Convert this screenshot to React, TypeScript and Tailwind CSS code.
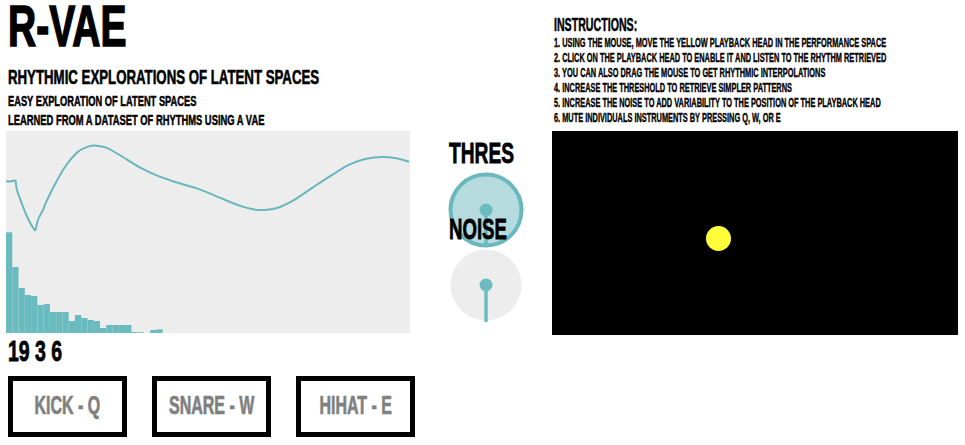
const curve = [
  [19, 154], [34, 154], [48, 151],
];
const drop = [
  [48, 151], [52, 180], [70, 230], [80, 255], [95, 285], [107, 303],
];
const rise = [
  [107, 303], [115, 270], [130, 240], [140, 215], [170, 155], [200, 105], [235, 65], [265, 50], [290, 47], [320, 53],
  [360, 75], [420, 112], [480, 140], [540, 160], [600, 178], [660, 203], [720, 227], [760, 238], [790, 240], [830, 235],
  [880, 212], [940, 172], [1000, 133], [1050, 103], [1100, 86], [1150, 81], [1190, 85], [1228, 95],
];
const bars = [100.7, 66, 45, 38, 37, 28, 29, 21, 21, 21, 12, 18, 15, 13, 12, 5, 8, 8, 8, 8, 1, 0.7, 0, 3, 3.7];

// catmull-rom through the points, so the line stays smooth between the kinks
function smooth(pts: number[][]) {
  let d = `M${pts[0][0]} ${pts[0][1]}`;
  for (let i = 0; i < pts.length - 1; i++) {
    const p0 = pts[i - 1] || pts[i];
    const p1 = pts[i];
    const p2 = pts[i + 1];
    const p3 = pts[i + 2] || p2;
    d += ` C${p1[0] + (p2[0] - p0[0]) / 6} ${p1[1] + (p2[1] - p0[1]) / 6} ${p2[0] - (p3[0] - p1[0]) / 6} ${p2[1] - (p3[1] - p1[1]) / 6} ${p2[0]} ${p2[1]}`;
  }
  return d;
}

function Chart() {
  return (
    <svg viewBox="0 0 404 202" className="block w-[404px] h-[202px] bg-[#ededed]">
      {bars.map((h, i) => (
        <rect key={i} x={i * 6.27} y={202 - h} width={6.27} height={h} fill="#69bbbf" />
      ))}
      <g transform="scale(0.3333) translate(-19 -3)" fill="none" stroke="#69b7bc" strokeWidth="6" strokeLinejoin="round">
        <path d={smooth(curve)} />
        <path d={smooth(drop)} />
        <path d={smooth(rise)} />
      </g>
    </svg>
  );
}

function Dial({ active }: { active?: boolean }) {
  return (
    <svg viewBox="0 0 76 76" className="block w-[76px] h-[76px] overflow-visible">
      {active ? (
        <circle cx="38" cy="38" r="35.5" fill="#b6dbde" stroke="#6ab8bd" strokeWidth="4" />
      ) : (
        <circle cx="38" cy="38" r="35.5" fill="#ededed" />
      )}
      <line x1="38" y1="38" x2="38" y2={active ? 74 : 75} stroke="#6bbcc0" strokeWidth="3.5" />
      <circle cx="38" cy="38" r="6.5" fill="#6bbcc0" />
    </svg>
  );
}

function MuteButton({ label }: { label: string }) {
  return (
    <div className="w-[119px] h-[61px] pb-[3px] border-[5px] border-black flex items-center justify-center overflow-hidden">
      <span className="inline-block whitespace-nowrap text-[25px] leading-[30px] font-bold text-[#808080] scale-x-[0.64] [-webkit-text-stroke-width:0.7px]">
        {label}
      </span>
    </div>
  );
}

const steps = [
  "1. Using the mouse, move the yellow playback head in the performance space",
  "2. Click on the playback head to enable it and listen to the rhythm retrieved",
  "3. You can also drag the mouse to get rhythmic interpolations",
  "4. Increase the threshold to retrieve simpler patterns",
  "5. Increase the noise to add variability to the position of the playback head",
  "6. Mute individuals instruments by pressing Q, W, or E",
];

export default function App() {
  return (
    <div className="flex w-[965px] h-[445px] overflow-hidden bg-white text-black uppercase font-['Liberation_Sans',Arial,sans-serif]">
      <div className="ml-[6px] w-[410px] shrink-0">
        <div className="ml-[2px] -mt-[3px] h-[58px] text-[58px] leading-[58px] font-bold whitespace-nowrap origin-left scale-x-[0.672] [-webkit-text-stroke-width:1.6px]">R-VAE</div>
        <div className="ml-[2px] mt-[10px] h-[24px] text-[20px] leading-[24px] font-bold whitespace-nowrap origin-left scale-x-[0.662] [-webkit-text-stroke-width:0.6px]">Rhythmic explorations of latent spaces</div>
        <div className="ml-[2px] mt-[3px] h-[18px] text-[15px] leading-[18px] font-bold whitespace-nowrap origin-left scale-x-[0.62] [-webkit-text-stroke-width:0.5px]">Easy exploration of latent spaces</div>
        <div className="ml-[2px] mt-[1px] h-[18px] text-[15px] leading-[18px] font-bold whitespace-nowrap origin-left scale-x-[0.625] [-webkit-text-stroke-width:0.5px]">Learned from a dataset of rhythms using a VAE</div>
        <div className="mt-[2px]">
          <Chart />
        </div>
        <div className="ml-[2px] mt-[5px] h-[26px] text-[30px] leading-[26px] font-bold whitespace-pre origin-left scale-x-[0.65] [-webkit-text-stroke-width:0.8px]">19 3 6</div>
        <div className="ml-[2px] mt-[12px] flex gap-[25px]">
          <MuteButton label="Kick - Q" />
          <MuteButton label="Snare - W" />
          <MuteButton label="Hihat - E" />
        </div>
      </div>

      <div className="ml-[32px] w-[76px] shrink-0 pt-[138px]">
        <div className="ml-[1px] h-[30px] text-[30px] leading-[30px] font-bold whitespace-nowrap origin-left scale-x-[0.64] [-webkit-text-stroke-width:0.8px]">Thres</div>
        <div className="mt-[4px]">
          <Dial active />
        </div>
        <div className="relative z-10 ml-[1px] -mt-[34px] h-[30px] text-[30px] leading-[30px] font-bold whitespace-nowrap origin-left scale-x-[0.62] [-webkit-text-stroke-width:0.8px]">Noise</div>
        <div className="mt-[3px]">
          <Dial />
        </div>
      </div>

      <div className="ml-[28px] w-[406px] shrink-0 pt-[16px]">
        <div className="ml-[2px] h-[18px] text-[18px] leading-[18px] font-bold whitespace-nowrap origin-left scale-x-[0.59] [-webkit-text-stroke-width:0.5px]">Instructions:</div>
        <div className="mt-[1px] ml-[2px]">
          {steps.map((s) => (
            <div key={s} className="h-[15px] text-[13px] leading-[15px] font-bold whitespace-nowrap origin-left scale-x-[0.568] [-webkit-text-stroke-width:0.4px]">{s}</div>
          ))}
        </div>
        <div className="relative mt-[6px] h-[204px] bg-black">
          <div className="absolute left-[154px] top-[95px] w-[25px] h-[25px] rounded-full bg-[#ffff3c]" />
        </div>
      </div>
    </div>
  );
}
